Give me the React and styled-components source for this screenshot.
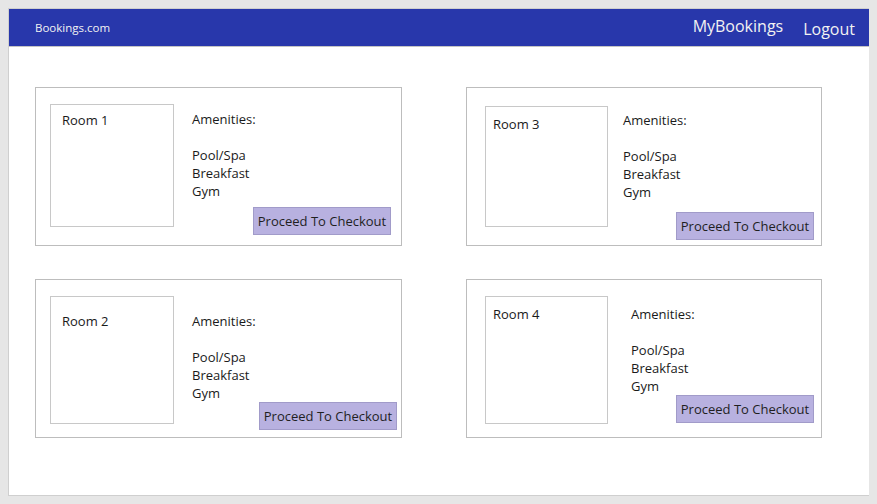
import styled, { createGlobalStyle } from "styled-components";

const GlobalStyle = createGlobalStyle`
body {
  margin: 8px;
  background: #e6e6e6;
  font-family: "Open Sans", "Noto Sans", sans-serif;
}
`;

const rooms = [
  { name: "Room 1", box: [16, 14, 124, 123], label: [6, 11], info: [22, 10, 10, 18] },
  { name: "Room 3", box: [18, 18, 123, 121], label: [8, 7], info: [23, 7, 5, 15] },
  { name: "Room 2", box: [16, 14, 124, 128], label: [15, 11], info: [32, 4, 7, 18] },
  { name: "Room 4", box: [16, 18, 123, 128], label: [8, 7], info: [25, 7, 14, 23] },
];

const App = () => {
  return (
    <>
      <GlobalStyle />
      <Frame>
        <Header>
          <Brand>Bookings.com</Brand>
          <Nav>
            <NavLink>MyBookings</NavLink>
            <NavLink $drop>Logout</NavLink>
          </Nav>
        </Header>
        <Grid>
          {rooms.map((r, i) => (
            <Card key={r.name} $w={i % 2 === 0 ? 367 : 356}>
              <RoomBox $m={r.box} $pad={r.label}>
                {r.name}
              </RoomBox>
              <Info $pad={r.info}>
                <Amenities>
                  Amenities:
                  <br />
                  <br />
                  Pool/Spa
                  <br />
                  Breakfast
                  <br />
                  Gym
                </Amenities>
                <CheckoutButton>Proceed To Checkout</CheckoutButton>
              </Info>
            </Card>
          ))}
        </Grid>
      </Frame>
    </>
  );
};

const Frame = styled.div`
  width: 864px;
  height: 488px;
  box-sizing: border-box;
  background: #fff;
  border: 1px solid #cfcfcf;
  box-shadow: 0 1px 2px rgba(0, 0, 0, 0.12);
`;

const Header = styled.div`
  display: flex;
  align-items: center;
  justify-content: space-between;
  height: 37px;
  background: #2837ab;
  border-bottom: 1px solid #c4c4c4;
  padding: 0 16px 0 26px;
  color: #f2f2f2;
`;

const Brand = styled.div`
  font-size: 11.5px;
`;

const Nav = styled.div`
  display: flex;
  gap: 20px;
`;

const NavLink = styled.div`
  font-size: 16px;
  padding-top: ${(p) => (p.$drop ? "3px" : "0")};
`;

const Grid = styled.div`
  display: grid;
  grid-template-columns: 367px 356px;
  column-gap: 64px;
  row-gap: 33px;
  padding: 40px 0 0 26px;
`;

const Card = styled.div`
  display: flex;
  width: ${(p) => p.$w}px;
  height: 159px;
  box-sizing: border-box;
  border: 1px solid #bdbdbd;
  color: #1a1a1a;
  font-size: 13px;
  line-height: 18px;
`;

const RoomBox = styled.div`
  flex-shrink: 0;
  box-sizing: border-box;
  margin: ${(p) => p.$m[0]}px 0 0 ${(p) => p.$m[1]}px;
  width: ${(p) => p.$m[2]}px;
  height: ${(p) => p.$m[3]}px;
  padding: ${(p) => p.$pad[0]}px 0 0 ${(p) => p.$pad[1]}px;
  border: 1px solid #c8c8c8;
`;

const Info = styled.div`
  flex: 1;
  display: flex;
  flex-direction: column;
  padding: ${(p) => p.$pad.map((v) => v + "px").join(" ")};
`;

const Amenities = styled.div``;

const CheckoutButton = styled.button`
  margin-top: auto;
  align-self: flex-end;
  width: 138px;
  height: 28px;
  padding: 0;
  box-sizing: border-box;
  background: #b8b1e0;
  border: 1px solid #a19bc9;
  color: #1f1f1f;
  font-family: inherit;
  font-size: 13px;
`;

export default App;
